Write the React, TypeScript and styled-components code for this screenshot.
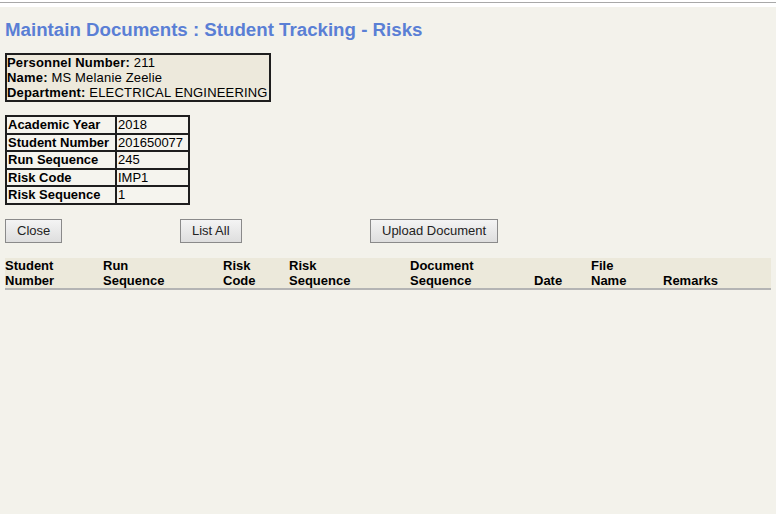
import styled, { createGlobalStyle } from 'styled-components';

const GlobalStyle = createGlobalStyle`
  html, body {
    margin: 0;
    padding: 0;
    background: #ffffff;
    font-family: "Liberation Sans", Arial, sans-serif;
    color: #000;
  }
  #root {
    min-height: 514px;
    display: flex;
    flex-direction: column;
  }
`;

const details = [
  { label: 'Academic Year', value: '2018' },
  { label: 'Student Number', value: '201650077' },
  { label: 'Run Sequence', value: '245' },
  { label: 'Risk Code', value: 'IMP1' },
  { label: 'Risk Sequence', value: '1' },
];

const columns: { lines: string[]; width: number }[] = [
  { lines: ['Student', 'Number'], width: 98 },
  { lines: ['Run', 'Sequence'], width: 120 },
  { lines: ['Risk', 'Code'], width: 66 },
  { lines: ['Risk', 'Sequence'], width: 121 },
  { lines: ['Document', 'Sequence'], width: 124 },
  { lines: ['Date'], width: 57 },
  { lines: ['File', 'Name'], width: 72 },
  { lines: ['Remarks'], width: 108 },
];

export default function App() {
  return (
    <>
      <GlobalStyle />
      <TopBar />
      <Page>
        <Title>Maintain Documents : Student Tracking - Risks</Title>

        <UserBox>
          <div>
            <b>Personnel Number:</b> 211
          </div>
          <div>
            <b>Name:</b> MS Melanie Zeelie
          </div>
          <div>
            <b>Department:</b> ELECTRICAL ENGINEERING
          </div>
        </UserBox>

        <DetailTable>
          <tbody>
            {details.map((d) => (
              <tr key={d.label}>
                <Label>{d.label}</Label>
                <Value>{d.value}</Value>
              </tr>
            ))}
          </tbody>
        </DetailTable>

        <ButtonRow>
          <div>
            <Button>Close</Button>
          </div>
          <div>
            <Button>List All</Button>
          </div>
          <div>
            <Button>Upload Document</Button>
          </div>
        </ButtonRow>

        <HeaderRow $cols={columns.map((c) => `${c.width}px`).join(' ')}>
          {columns.map((c, i) => (
            <HeaderCell key={i}>
              {c.lines.map((l) => (
                <span key={l}>{l}</span>
              ))}
            </HeaderCell>
          ))}
        </HeaderRow>
      </Page>
    </>
  );
}

const TopBar = styled.div`
  height: 7px;
  background: #fff;
  border-top: 2px solid #fff;
  box-sizing: border-box;

  &::before {
    content: '';
    display: block;
    height: 1px;
    background: #a8a8a8;
  }
`;

const Page = styled.div`
  flex: 1;
  background: #f3f2eb;
  padding: 0 5px;
  display: flex;
  flex-direction: column;
  align-items: flex-start;
`;

const Title = styled.h1`
  margin: 11px 0 12px;
  font-size: 18.7px;
  line-height: 23px;
  font-weight: bold;
  color: #5a7fd5;
`;

const UserBox = styled.div`
  border: 2px solid #1e1e1e;
  background: #ede9dc;
  font-size: 13px;
  line-height: 15px;
  letter-spacing: 0.18px;
  padding: 0 1px 0 0;
  margin-bottom: 13px;
`;

const DetailTable = styled.table`
  border-collapse: collapse;
  font-size: 13px;
  margin-bottom: 14px;
`;

const Label = styled.td`
  border: 2px solid #1e1e1e;
  background: #f5f4ee;
  font-weight: bold;
  padding: 0 3px 0 1px;
  height: 15.5px;
  line-height: 15px;
  width: 104px;
  white-space: nowrap;
`;

const Value = styled.td`
  border: 2px solid #1e1e1e;
  background: #f5f4ee;
  padding: 0 0 0 1px;
  height: 15.5px;
  line-height: 15px;
  width: 70px;
`;

const ButtonRow = styled.div`
  display: grid;
  grid-template-columns: 175px 190px auto;
  margin-bottom: 15px;
`;

const Button = styled.button`
  font-family: "Liberation Sans", Arial, sans-serif;
  font-size: 13px;
  height: 24px;
  padding: 0 11px;
  color: #222;
  background: linear-gradient(#f4f4f4, #dedede);
  border: 1px solid #8a8a8a;
  border-radius: 0;
`;

const HeaderRow = styled.div<{ $cols: string }>`
  display: grid;
  grid-template-columns: ${(p) => p.$cols};
  background: #ece9db;
  border-bottom: 2px solid #b4b4b4;
  font-size: 13px;
  line-height: 15px;
  font-weight: bold;
`;

const HeaderCell = styled.div`
  display: flex;
  flex-direction: column;
  justify-content: flex-end;
  height: 30px;
`;
